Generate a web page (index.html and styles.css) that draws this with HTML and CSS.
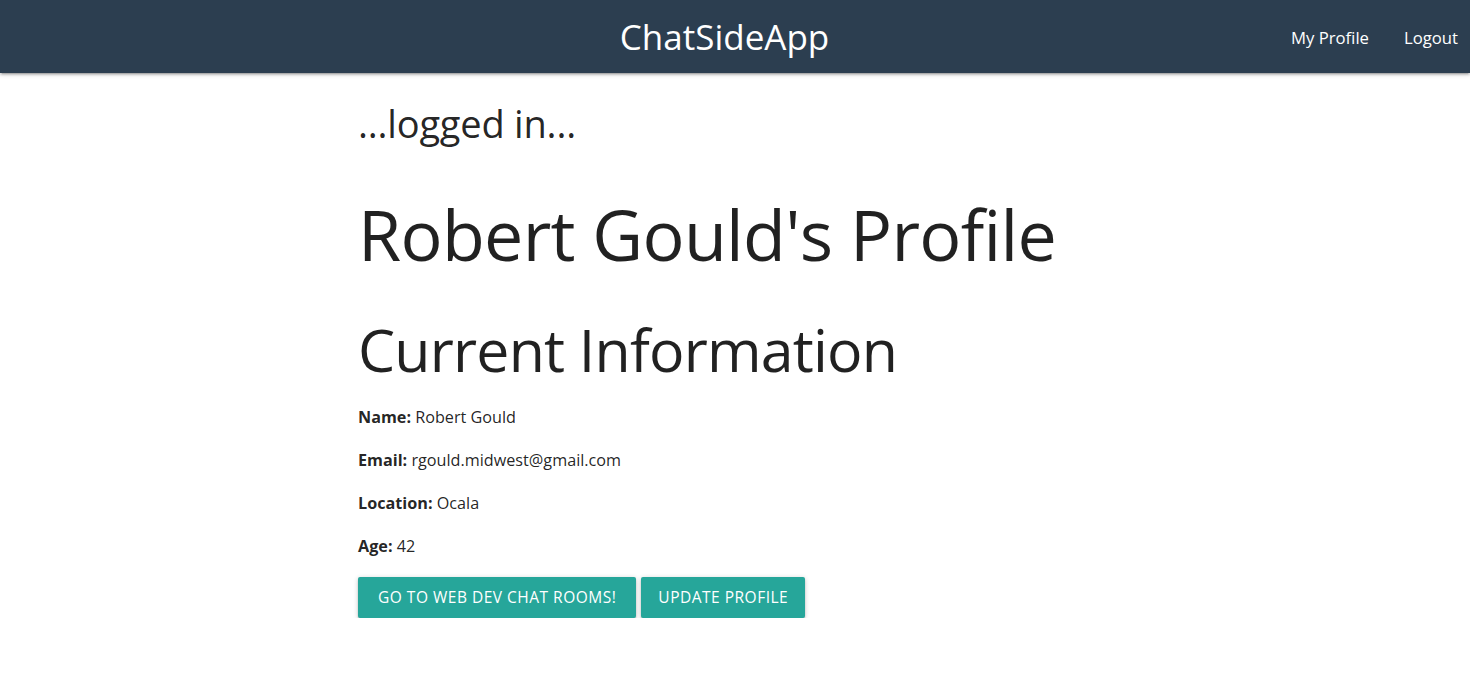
FILE: index.html
```html
<!DOCTYPE html>
<html lang="en">
<head>
<meta charset="utf-8">
<title>ChatSideApp</title>
<link rel="stylesheet" href="styles.css">
</head>
<body>
<nav class="nav">
  <a class="brand" href="#">ChatSideApp</a>
  <ul class="nav-links">
    <li><a href="#">My Profile</a></li>
    <li><a href="#">Logout</a></li>
  </ul>
</nav>
<main class="container">
  <h4 class="status">...logged in...</h4>
  <h1 class="title">Robert Gould's Profile</h1>
  <h2 class="subtitle">Current Information</h2>
  <p class="info"><strong>Name:</strong> Robert Gould</p>
  <p class="info"><strong>Email:</strong> rgould.midwest@gmail.com</p>
  <p class="info"><strong>Location:</strong> Ocala</p>
  <p class="info"><strong>Age:</strong> 42</p>
  <div class="actions">
    <a class="btn" href="#">Go to Web Dev Chat Rooms!</a>
    <a class="btn" href="#">Update Profile</a>
  </div>
</main>
</body>
</html>
```
FILE: styles.css
```css
* { box-sizing: border-box; }
html, body { margin: 0; padding: 0; }
body {
  font-family: "Open Sans", "Noto Sans", sans-serif;
  color: rgba(0,0,0,0.87);
  background: #fff;
}
a { text-decoration: none; }

.nav {
  position: relative;
  height: 73px;
  background: #2c3e50;
  box-shadow: 0 2px 2px 0 rgba(0,0,0,.14), 0 3px 1px -2px rgba(0,0,0,.12), 0 1px 5px 0 rgba(0,0,0,.2);
  display: flex;
  justify-content: center;
  align-items: center;
}
.brand {
  color: #fff;
  font-size: 35px;
  line-height: 75px;
  margin-right: 21px;
}
.nav-links {
  position: absolute;
  right: 0;
  top: 0;
  margin: 0;
  padding: 0;
  list-style: none;
  display: flex;
}
.nav-links a {
  display: block;
  color: #fff;
  font-size: 16.7px;
  line-height: 75px;
  padding: 0 12px 0 23px;
}

.container {
  width: 754px;
  margin: 0 auto;
  padding-top: 29px;
}
.status {
  margin: 0;
  font-weight: 400;
  font-size: 38px;
  letter-spacing: -0.2px;
  line-height: 43px;
}
.title {
  margin: 50px 0 0;
  font-weight: 400;
  font-size: 70px;
  letter-spacing: -0.7px;
  line-height: 79px;
}
.subtitle {
  margin: 41px 0 0;
  font-weight: 400;
  font-size: 59px;
  letter-spacing: -0.8px;
  line-height: 68px;
}
.info {
  margin: 0 0 17.4px;
  font-size: 16.2px;
  line-height: 25.6px;
}
.subtitle + .info { margin-top: 21.6px; }
.info strong { font-weight: 700; }
.actions {
  margin-top: 1.4px;
  display: flex;
  gap: 5px;
}
.btn {
  display: inline-block;
  height: 41px;
  line-height: 41px;
  padding: 0 20px;
  background: #26a69a;
  color: #fff;
  border-radius: 2px;
  font-size: 15.5px;
  letter-spacing: .5px;
  text-transform: uppercase;
  box-shadow: 0 2px 2px 0 rgba(0,0,0,.14), 0 3px 1px -2px rgba(0,0,0,.12), 0 1px 5px 0 rgba(0,0,0,.2);
}
.btn + .btn { padding: 0 17px; }
```
